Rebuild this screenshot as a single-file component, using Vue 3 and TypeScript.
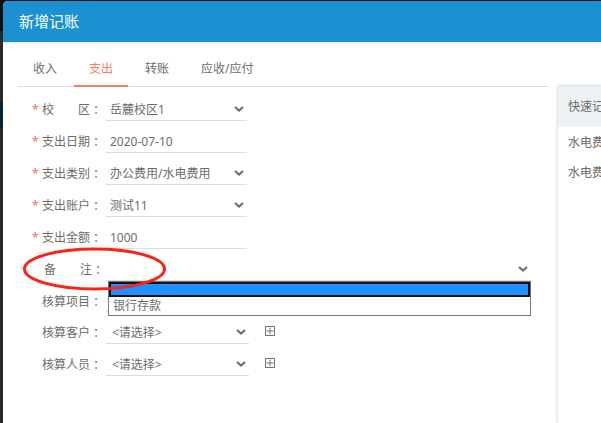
<script setup lang="ts">
import { ref } from 'vue'

interface Field {
  id: string
  label: string
  spread?: boolean
  required?: boolean
  kind: 'select' | 'input'
  value: string
  size?: 'wide' | 'full'
  addable?: boolean
  remark?: boolean
}

const tabs = ['收入', '支出', '转账', '应收/应付']
const activeTab = ref('支出')

const fields = ref<Field[]>([
  { id: 'campus', label: '校区', spread: true, required: true, kind: 'select', value: '岳麓校区1' },
  { id: 'date', label: '支出日期', required: true, kind: 'input', value: '2020-07-10' },
  { id: 'category', label: '支出类别', required: true, kind: 'select', value: '办公费用/水电费用' },
  { id: 'account', label: '支出账户', required: true, kind: 'select', value: '测试11' },
  { id: 'amount', label: '支出金额', required: true, kind: 'input', value: '1000' },
  { id: 'remark', label: '备注', spread: true, kind: 'select', value: '', size: 'full', remark: true },
  { id: 'project', label: '核算项目', kind: 'select', value: '', size: 'wide' },
  { id: 'customer', label: '核算客户', kind: 'select', value: '<请选择>', size: 'wide', addable: true },
  { id: 'staff', label: '核算人员', kind: 'select', value: '<请选择>', size: 'wide', addable: true },
])

const remarkOptions = ['', '银行存款']
const selectedOption = ref('')
const quickEntries = ['水电费', '水电费']
</script>

<template>
  <div class="backdrop">
    <section class="dialog" role="dialog" aria-labelledby="dialog-title">
      <header class="dialog-header">
        <h1 id="dialog-title">新增记账</h1>
      </header>
      <div class="dialog-body">
        <main class="entry">
          <nav class="tabs" role="tablist">
            <button
              v-for="tab in tabs"
              :key="tab"
              type="button"
              role="tab"
              class="tab"
              :class="{ active: tab === activeTab }"
              :aria-selected="tab === activeTab"
              @click="activeTab = tab"
            >{{ tab }}</button>
          </nav>
          <form class="form" @submit.prevent>
            <div v-for="field in fields" :key="field.id" class="row" :class="field.id">
              <span class="star">{{ field.required ? '*' : '' }}</span>
              <label :for="field.id" class="label">
                <span class="name" :class="{ spread: field.spread }">
                  <template v-if="field.spread"><span>{{ field.label[0] }}</span><span>{{ field.label[1] }}</span></template>
                  <template v-else>{{ field.label }}</template>
                </span>
                <span class="colon">：</span>
              </label>
              <div class="control" :class="field.size">
                <input v-if="field.kind === 'input'" :id="field.id" v-model="field.value" type="text" />
                <template v-else>
                  <select :id="field.id" v-model="field.value" :class="{ padded: field.addable }">
                    <option :value="field.value">{{ field.value }}</option>
                  </select>
                  <svg class="chevron" viewBox="0 0 10 6" aria-hidden="true">
                    <path d="M1 0.9 5 4.6 9 0.9" />
                  </svg>
                </template>
                <ul v-if="field.remark" class="options" role="listbox">
                  <li
                    v-for="option in remarkOptions"
                    :key="option"
                    role="option"
                    :class="{ selected: option === selectedOption }"
                    :aria-selected="option === selectedOption"
                    @click="selectedOption = option"
                  >{{ option }}</li>
                </ul>
                <svg v-if="field.remark" class="ring" viewBox="0 0 144 44" aria-hidden="true">
                  <ellipse cx="72.5" cy="22" rx="70" ry="20" />
                </svg>
              </div>
              <button v-if="field.addable" type="button" class="add" :aria-label="field.label">
                <svg viewBox="0 0 10 10" aria-hidden="true">
                  <path d="M0.5 0.5h9v9h-9zM5 1.5v7M1.5 5h7" />
                </svg>
              </button>
            </div>
          </form>
        </main>
        <aside class="quick">
          <h2>快速记账</h2>
          <ul>
            <li v-for="(entry, index) in quickEntries" :key="index">{{ entry }}</li>
          </ul>
        </aside>
      </div>
    </section>
  </div>
</template>

<style>
body {
  margin: 0;
}
</style>

<style scoped>
.backdrop {
  box-sizing: border-box;
  display: flex;
  min-height: 100vh;
  padding: 1px 0 0 3px;
  overflow: hidden;
  background: linear-gradient(#0b0f14 31px, #292929 31px, #292929 102px, #06243a 102px, #06243a 129px, #292929 129px);
  color: #6c6c6c;
  font: 12px/18px "Noto Sans", "Noto Sans CJK SC", sans-serif;
}

.dialog {
  display: flex;
  flex: 1;
  flex-direction: column;
  min-width: 0;
  background: #fff;
  border-top-left-radius: 5px;
}

.dialog-header {
  padding: 0 16px;
  background: #1a92d2;
  border-bottom: 1px solid #eee;
  border-top-left-radius: 5px;
}

h1 {
  margin: 0;
  color: #fff;
  font-size: 15px;
  font-weight: 400;
  line-height: 41px;
}

.dialog-body {
  display: grid;
  flex: 1;
  grid-template-columns: minmax(0, 1fr) 43px;
  gap: 10px;
  padding-left: 15px;
}

.tabs {
  display: flex;
  gap: 2px;
  height: 43px;
  padding-top: 1px;
  box-shadow: inset 0 -1px #ddd;
}

.tab {
  padding: 8px 15px 0;
  background: none;
  border: 0;
  border-bottom: 2px solid transparent;
  color: inherit;
  font: inherit;
}

.tab.active {
  border-color: #f97d62;
  color: #f97d62;
}

.form {
  padding: 2px 17px 0 14px;
}

.row {
  display: flex;
  height: 32px;
}

.row.project {
  height: 31px;
}

.star {
  width: 10px;
  color: #f4695f;
  line-height: 42px;
}

.label {
  display: flex;
  width: 64px;
  line-height: 42px;
}

.remark .label {
  box-sizing: border-box;
  padding-left: 2px;
}

.name {
  display: flex;
  width: 48px;
}

.spread {
  justify-content: space-between;
}

.colon {
  font-family: "Noto Sans CJK TC", sans-serif;
}

.control {
  position: relative;
  display: grid;
  box-sizing: border-box;
  width: 141px;
  border-bottom: 1px solid #ddd;
}

.control.wide {
  width: 143px;
}

.control.full {
  flex: 1;
}

input,
select {
  grid-area: 1 / 1;
  box-sizing: border-box;
  width: 100%;
  min-width: 0;
  margin: 0;
  padding: 10px 4px 0;
  appearance: none;
  background: none;
  border: 0;
  outline: 0;
  color: inherit;
  font: inherit;
}

select.padded {
  padding-left: 6px;
}

.chevron {
  grid-area: 1 / 1;
  place-self: end;
  width: 10px;
  height: 6px;
  margin: 0 3px 8px 0;
  fill: none;
  stroke: #6c6c6c;
  stroke-width: 2;
  pointer-events: none;
}

.options {
  position: absolute;
  top: 100%;
  right: 0;
  left: 2px;
  z-index: 1;
  margin: 1px 0 0;
  padding: 0;
  background: #fff;
  border: 1px solid #777;
  list-style: none;
}

.options li {
  padding: 0 4px;
}

.options .selected {
  height: 11px;
  background: #1e90ff;
  border: 2px solid #111;
}

.ring {
  position: absolute;
  top: -2px;
  left: -84px;
  z-index: 2;
  width: 144px;
  height: 44px;
  fill: none;
  stroke: #fb2314;
  stroke-width: 3;
  pointer-events: none;
}

.add {
  align-self: end;
  width: 10px;
  height: 10px;
  margin: 0 0 8px 16px;
  padding: 0;
  background: none;
  border: 0;
}

.add svg {
  display: block;
  fill: none;
  stroke: #776f78;
}

.quick {
  margin-top: 43px;
  overflow: hidden;
  box-shadow: 0 0 3px #bbb;
  white-space: nowrap;
}

h2 {
  margin: 0;
  padding: 1px 0 0 10px;
  background: #edf1f4;
  font-size: 12px;
  font-weight: 400;
  line-height: 40px;
}

.quick ul {
  margin: 0;
  padding: 1px 0 0 10px;
  list-style: none;
  line-height: 30px;
}
</style>
